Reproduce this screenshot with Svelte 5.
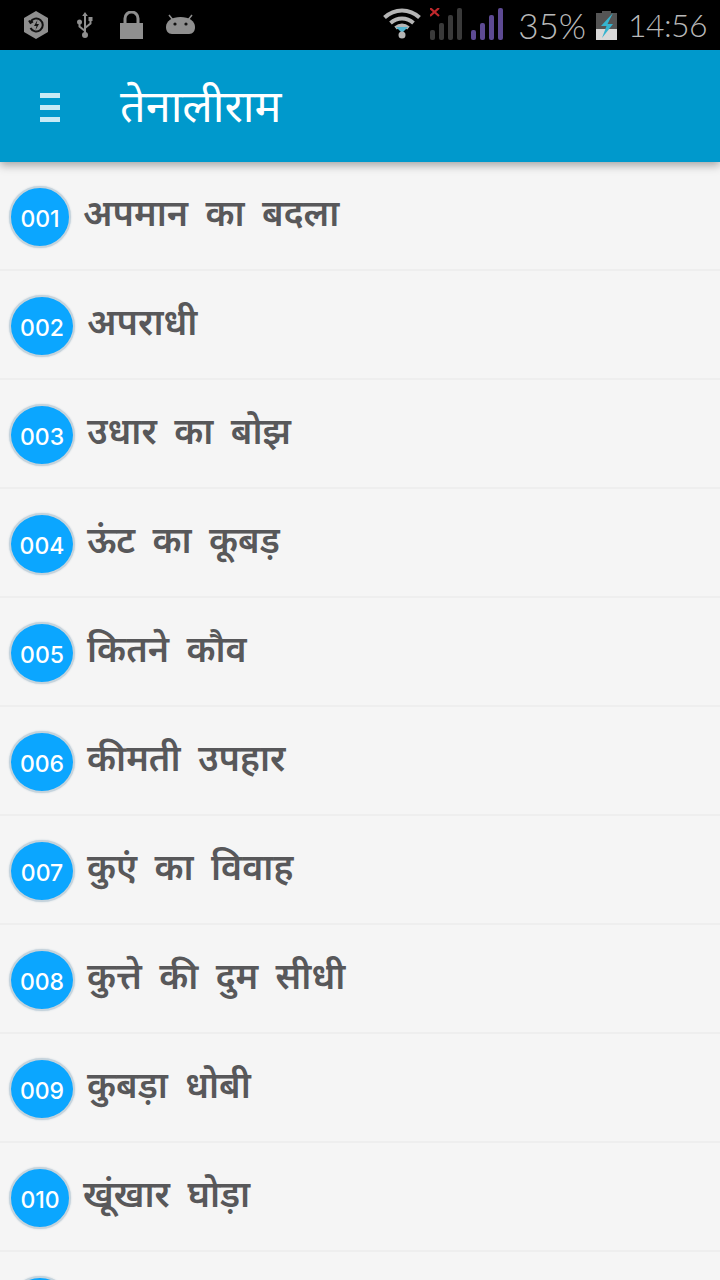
<script>
  const rows = [
    ['001','अपमान का बदला',1],['002','अपराधी'],['003','उधार का बोझ'],['004','ऊंट का कूबड़'],['005','कितने कौव'],
    ['006','कीमती उपहार'],['007','कुएं का विवाह'],['008','कुत्ते की दुम सीधी'],['009','कुबड़ा धोबी'],['010','खूंखार घोड़ा',1],['','',1]
  ];
</script>

<div class="screen">
  <div class="status">
    <div class="left">
      <svg class="hex" width="24" height="28" viewBox="0 0 24 28"><path fill="#8f8f8f" d="M12 0l12 7v14l-12 7-12-7V7z"/><path fill="none" stroke="#111" stroke-width="2" d="M6.500 11a6.500 6.500 0 1 1 0 6M5 9.500l1.500 2.500 2.500-1.500"/><path fill="#111" d="M13.500 9l-3.500 6h2.500l-1 4 3.500-6h-2.500z"/></svg>
      <svg class="usb" width="16" height="26" viewBox="0 0 16 26"><path fill="none" stroke="#8f8f8f" stroke-width="2" d="M8 3v20M8 19l-5.500-4.500V11M8 16l5.500-4.500V8"/><circle cx="8" cy="23" r="3" fill="#8f8f8f"/><path fill="#8f8f8f" d="M8 0l2.800 4H5.200zM11.500 5h4v4h-4z"/><circle cx="2.500" cy="10" r="2.500" fill="#8f8f8f"/></svg>
      <svg class="lock" width="23" height="28" viewBox="0 0 23 28"><rect y="12" width="23" height="16" fill="#8f8f8f"/><path fill="none" stroke="#8f8f8f" stroke-width="3" d="M5 12V7.500a6.500 6.500 0 0 1 13 0V12"/></svg>
      <svg class="droid" width="29" height="20" viewBox="0 0 29 20"><path fill="#8f8f8f" d="M0 13C0 7 6 3 14.500 3S29 7 29 13c0 4-2 7-6 7H6c-4 0-6-3-6-7z"/><path stroke="#8f8f8f" stroke-width="1.500" d="M7 6L3 1M22 6l4-5"/><circle cx="9" cy="10" r="1.600" fill="#111"/><circle cx="20" cy="10" r="1.600" fill="#111"/></svg>
    </div>
    <div class="right">
      <svg class="wifi" width="38" height="31" viewBox="0 0 38 31"><path fill="none" stroke="#b5b5b5" stroke-width="4" d="M1.500 9.500c10-9.500 25-9.500 35 0M7.500 15c7-6 16-6 23 0M12.500 20c4-3 9-3 13 0"/><path fill="#4fb3cf" d="M13 19h12l-6 6z"/><circle cx="19" cy="27" r="3.500" fill="#b5b5b5"/></svg>
      <svg class="sig1" width="32" height="32" viewBox="0 0 32 32"><path stroke="#c0282c" stroke-width="2.200" d="M0 0l9 8M9 0L0 8"/><g fill="#3a3a3a"><rect y="22" width="5" height="10" rx="2"/><rect x="9" y="15" width="5" height="17" rx="2"/><rect x="18" y="7" width="5" height="25" rx="2"/><rect x="27" y="0" width="5" height="32" rx="2"/></g></svg>
      <svg class="sig2" width="32" height="32" viewBox="0 0 32 32"><g fill="#5d4a93"><rect y="22" width="5" height="10" rx="2"/><rect x="9" y="15" width="5" height="17" rx="2"/><rect x="18" y="7" width="5" height="25" rx="2"/><rect x="27" y="0" width="5" height="32" rx="2"/></g></svg>
      <span class="pct">35%</span>
      <svg class="bat" width="21" height="29" viewBox="0 0 21 29"><rect x="6" y="0" width="9" height="3" fill="#555"/><rect y="2" width="21" height="16" fill="#555"/><rect y="18" width="21" height="11" fill="#d8d8d8"/><path fill="#35b4cf" d="M17 2L5 15h5.500L6 27l11-14h-5.500z"/></svg>
      <span class="time">14:56</span>
    </div>
  </div>

  <header class="bar">
    <div class="menu"><i></i><i></i><i></i></div>
    <h1>तेनालीराम</h1>
  </header>

  <ul class="list">
    {#each rows as [num, title, narrow]}
      <li>
        <span class="badge" class:narrow>{num}</span>
        {#if title}<span class="title">{title}</span>{/if}
      </li>
    {/each}
  </ul>
</div>

<style>
  :global(body) { margin: 0; }
  .screen {
    width: 720px; height: 1280px; overflow: hidden; background: #f5f5f5;
    font-family: "Noto Sans", "Noto Sans Devanagari", sans-serif;
    display: flex; flex-direction: column;
  }
  .status {
    height: 50px; flex: none; background: #000; display: flex; justify-content: space-between; align-items: flex-start;
    box-sizing: border-box; padding: 0 13px 0 24px;
  }
  .left { display: flex; align-items: flex-start; }
  .hex { margin-top: 11px; }
  .usb { margin: 12px 0 0 29px; }
  .lock { margin: 11px 0 0 27px; }
  .droid { margin: 14px 0 0 23px; }
  .right { display: flex; align-items: flex-start; }
  .wifi { margin-top: 8px; }
  .sig1 { margin: 8px 0 0 9px; }
  .sig2 { margin: 8px 0 0 9px; }
  .pct, .time { font-family: Lato, sans-serif; font-weight: 300; font-size: 32px; color: #b9b9b9; line-height: 50px; }
  .pct { margin-left: 15px; font-size: 35px; }
  .bat { margin: 11px 0 0 10px; }
  .time { margin-left: 11px; letter-spacing: -0.6px; }
  .bar {
    height: 112px; flex: none; background: #0099cc; display: flex; align-items: flex-start; box-sizing: border-box; padding: 0 0 0 40px;
    box-shadow: 0 3px 9px rgba(0,0,0,.35); position: relative; z-index: 1;
  }
  .menu { width: 20px; margin-top: 43px; display: flex; flex-direction: column; gap: 7px; }
  .menu i { display: block; height: 5px; background: #c8eaf5; }
  h1 { margin: 25px 0 0 60px; font-size: 45px; line-height: 60px; font-weight: 400; color: #fff; }
  .list { list-style: none; margin: 0; padding: 0; }
  li {
    height: 107px; border-bottom: 2px solid #eeeeee;
    display: flex; align-items: center; padding-left: 9px;
  }
  .badge {
    width: 66px; height: 62px; flex: none; box-sizing: border-box; border-radius: 50%; background: #0ba6ff; color: #fff;
    border: 2px solid #c5d3dc; box-shadow: 0 0 2px #c5d3dc; display: flex; align-items: center; justify-content: center;
    font-family: Inter, sans-serif; font-weight: 500; font-size: 23px; margin-top: 3px; padding-top: 3px;
  }
  .badge.narrow { width: 62px; }
  .title { margin-left: 12px; font-size: 36px; font-weight: 600; color: #58585a; word-spacing: 8px; margin-top: -7px; }
</style>
